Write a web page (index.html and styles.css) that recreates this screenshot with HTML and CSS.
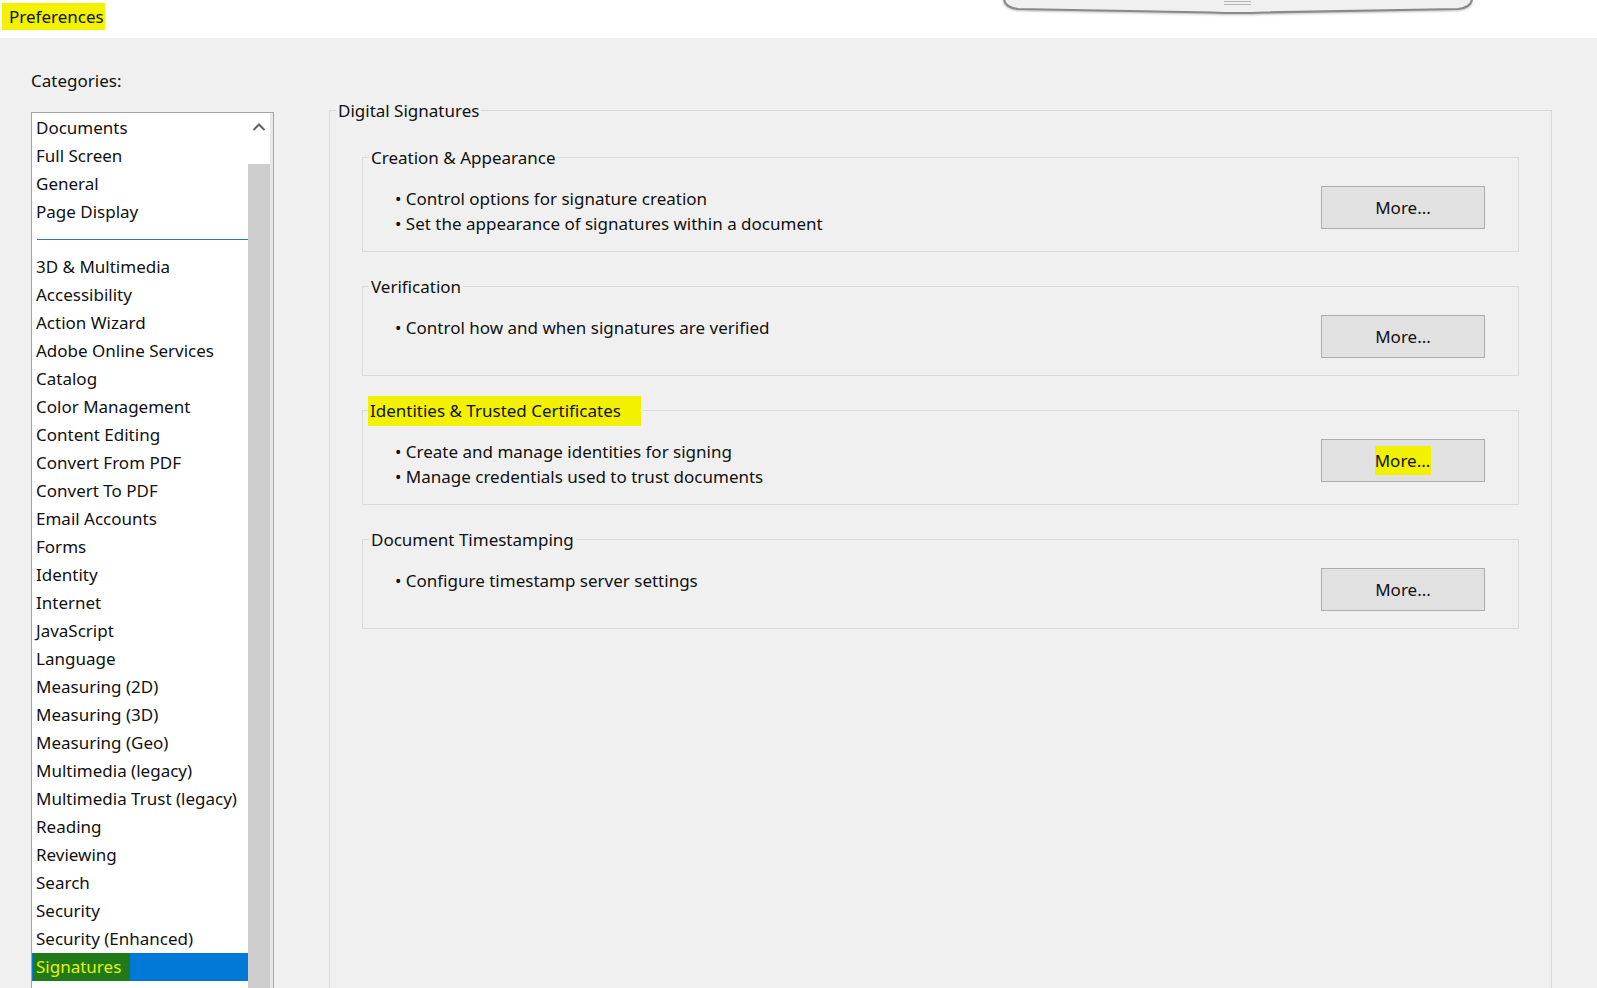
FILE: index.html
```html
<!DOCTYPE html>
<html lang="en">
<head>
    <meta charset="UTF-8">
    <title>Preferences</title>
    <link rel="stylesheet" href="styles.css">
</head>
<body>
    <div class="titlebar">
        <span class="title mark">Preferences</span>
        <svg class="frame-edge" width="474" height="16" viewBox="0 0 474 16">
            <path d="M2,0 Q4,8 16,9 L210,12.5 Q236,13.5 262,12.5 L456,9 Q468,8 470,0 Z" fill="#f0f0f0"/>
            <path d="M2,0 Q4,8 16,9 L210,12.5 Q236,13.5 262,12.5 L456,9 Q468,8 470,0" fill="none" stroke="#8a8a8a" stroke-width="2.2"/>
            <line x1="222" y1="1.5" x2="249" y2="1.5" stroke="#b4b4b4" stroke-width="1"/>
            <line x1="222" y1="4.5" x2="249" y2="4.5" stroke="#b4b4b4" stroke-width="1"/>
        </svg>
    </div>

    <div class="main">
        <div class="sidebar">
            <div class="cat-label">Categories:</div>
            <div class="listbox">
                <ul class="cat-list">
                    <li>Documents</li>
                    <li>Full Screen</li>
                    <li>General</li>
                    <li>Page Display</li>
                    <li class="sep"></li>
                    <li>3D &amp; Multimedia</li>
                    <li>Accessibility</li>
                    <li>Action Wizard</li>
                    <li>Adobe Online Services</li>
                    <li>Catalog</li>
                    <li>Color Management</li>
                    <li>Content Editing</li>
                    <li>Convert From PDF</li>
                    <li>Convert To PDF</li>
                    <li>Email Accounts</li>
                    <li>Forms</li>
                    <li>Identity</li>
                    <li>Internet</li>
                    <li>JavaScript</li>
                    <li>Language</li>
                    <li>Measuring (2D)</li>
                    <li>Measuring (3D)</li>
                    <li>Measuring (Geo)</li>
                    <li>Multimedia (legacy)</li>
                    <li>Multimedia Trust (legacy)</li>
                    <li>Reading</li>
                    <li>Reviewing</li>
                    <li>Search</li>
                    <li>Security</li>
                    <li>Security (Enhanced)</li>
                    <li class="selected"><span class="mark-green">Signatures</span></li>
                </ul>
                <div class="scrollbar">
                    <div class="scroll-up">
                        <svg width="14" height="10" viewBox="0 0 14 10">
                            <polyline points="1.5,8 7,2.5 12.5,8" fill="none" stroke="#606060" stroke-width="2"/>
                        </svg>
                    </div>
                    <div class="scroll-thumb"></div>
                </div>
            </div>
        </div>

        <div class="content">
            <fieldset class="group outer">
                <legend>Digital Signatures</legend>

                <fieldset class="group inner">
                    <legend>Creation &amp; Appearance</legend>
                    <div class="row">
                        <ul class="bullets">
                            <li>• Control options for signature creation</li>
                            <li>• Set the appearance of signatures within a document</li>
                        </ul>
                        <button class="btn">More...</button>
                    </div>
                </fieldset>

                <fieldset class="group inner">
                    <legend>Verification</legend>
                    <div class="row">
                        <ul class="bullets">
                            <li>• Control how and when signatures are verified</li>
                        </ul>
                        <button class="btn">More...</button>
                    </div>
                </fieldset>

                <fieldset class="group inner">
                    <legend><span class="mark mark-wide">Identities &amp; Trusted Certificates</span></legend>
                    <div class="row">
                        <ul class="bullets">
                            <li>• Create and manage identities for signing</li>
                            <li>• Manage credentials used to trust documents</li>
                        </ul>
                        <button class="btn"><span class="mark mark-btn">More...</span></button>
                    </div>
                </fieldset>

                <fieldset class="group inner">
                    <legend>Document Timestamping</legend>
                    <div class="row">
                        <ul class="bullets">
                            <li>• Configure timestamp server settings</li>
                        </ul>
                        <button class="btn">More...</button>
                    </div>
                </fieldset>
            </fieldset>
        </div>
    </div>
</body>
</html>
```

FILE: styles.css
```css
* {
    margin: 0;
    padding: 0;
    box-sizing: border-box;
}

html, body {
    height: 100%;
    overflow: hidden;
}

body {
    font-family: "Noto Sans", "Open Sans", sans-serif;
    font-size: 17px;
    color: #111;
    background: #f0f0f0;
}

.titlebar {
    position: relative;
    height: 38px;
    background: #fff;
    padding: 3px 0 0 2px;
}

.title {
    display: inline-block;
    font-size: 17px;
    line-height: 27px;
    padding: 0 1px 0 7px;
}

.mark {
    background: #f2f200;
}

.frame-edge {
    position: absolute;
    left: 1002px;
    top: 0;
    filter: drop-shadow(0 1px 1px rgba(0,0,0,0.25));
}

.main {
    display: flex;
    align-items: flex-start;
}

/* left categories list */
.sidebar {
    margin-left: 31px;
    width: 243px;
    padding-top: 30px;
}

.cat-label {
    line-height: 25px;
    margin-bottom: 19px;
}

.listbox {
    display: flex;
    height: 900px;
    border: 1px solid #a5a5a5;
    background: #fff;
}

.cat-list {
    list-style: none;
    flex: 1;
    padding-top: 1px;
}

.cat-list li {
    height: 28px;
    line-height: 28px;
    padding-left: 4px;
    white-space: nowrap;
}

.cat-list li.sep {
    height: 28px;
    padding: 0;
    margin-left: 5px;
    border-bottom: 1px solid #2b78b8;
    transform: translateY(-14px);
    margin-bottom: -1px;
}

.cat-list li.selected {
    background: #0078d7;
    padding-left: 1px;
}

.mark-green {
    display: inline-block;
    background: #217a1a;
    color: #e6f20c;
    padding: 0 9px 0 3px;
}

.scrollbar {
    width: 25px;
    display: flex;
    flex-direction: column;
    border-right: 3px solid #e8e8e8;
}

.scroll-up {
    height: 51px;
    background: #fff;
    display: flex;
    justify-content: center;
    padding-top: 9px;
    padding-right: 1px;
}

.scroll-thumb {
    flex: 1;
    background: #cdcdcd;
}

/* right panel */
.content {
    flex: 1;
    padding: 60px 45px 0 55px;
}

.group {
    border: 1px solid #dadada;
}

.group legend {
    margin-left: 6px;
    padding: 0 2px;
    line-height: 25px;
}

.outer {
    height: 1000px;
    padding: 0 32px;
}

.outer > legend {
    margin-left: -26px;
}

.inner {
    margin-top: 22px;
    padding: 0;
}

.row {
    display: flex;
    justify-content: space-between;
    align-items: flex-start;
    padding: 16px 33px 15px 32px;
}

.bullets {
    list-style: none;
}

.bullets li {
    line-height: 25px;
}

.btn {
    width: 164px;
    height: 43px;
    margin-bottom: 2px;
    background: #e1e1e1;
    border: 1px solid #adadad;
    font: inherit;
    color: #111;
}

.mark-wide {
    padding: 3px 20px 4px 2px;
    margin-left: -3px;
}

.mark-btn {
    padding: 3px 1px 3px 0;
}
```
